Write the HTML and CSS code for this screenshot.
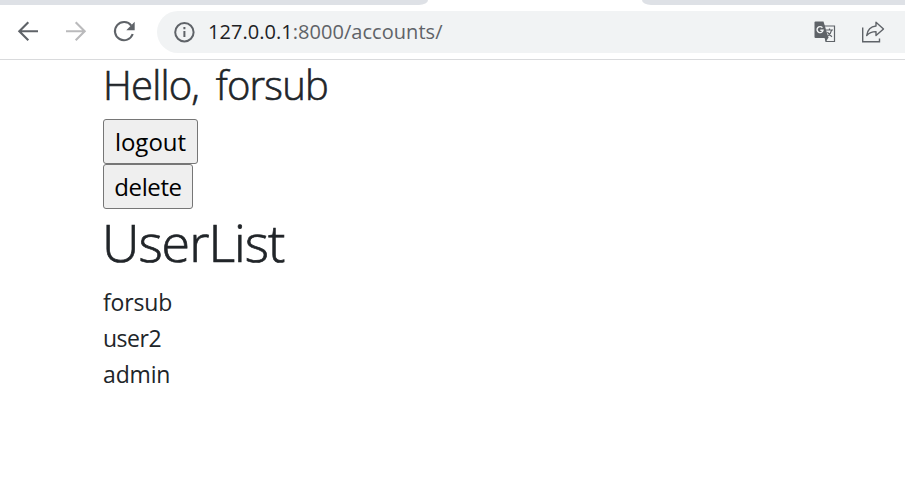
FILE: index.html
```html
<!DOCTYPE html>
<html lang="ko">
<head>
<meta charset="utf-8">
<title>accounts</title>
<link rel="stylesheet" href="styles.css">
</head>
<body>
<header class="browser">
  <div class="tabs"><span class="tab-left"></span><span class="tab-right"></span></div>
  <nav class="toolbar">
    <svg class="nav-icons" width="157" height="54" viewBox="0 5 157 54" fill="none" stroke="#5f6368" stroke-width="2.1">
      <path d="M38 31.3H20M28.3 22.3l-9 9 9 9"/>
      <path stroke="#bababc" d="M66 31.3h18M75.700 22.3l9 9-9 9"/>
      <path d="M131.3 25.6A9.1 9.1 0 1 0 132.7 34"/>
      <path fill="#5f6368" stroke="none" d="M134.7 21.8v8.4h-8.4z"/>
    </svg>
    <div class="address">
      <svg class="info" width="22" height="22" viewBox="0 0 22 22" fill="none" stroke="#5f6368" stroke-width="2">
        <circle cx="11.400" cy="11.300" r="9.2"/><path d="M11.400 10v6M11.400 6v2.200"/>
      </svg>
      <span class="url"><b>127.0.0.1</b>:8000/accounts/</span>
      <svg class="translate" width="22" height="22" viewBox="0 0 22 22">
        <path d="M9 5h11.5v15.500H12z" fill="#f1f3f4" stroke="#5f6368" stroke-width="1.200"/>
        <path d="M1.5.5h8l5 16.500H1.500Q.5 17 .5 16V1.500Q.5.500 1.500.5z" fill="#5f6368"/>
        <path d="M10.500 16.500h4L12 20.500z" fill="#5f6368"/>
        <path d="M8.400 6.700A3 3 0 1 0 9 9.300H6.300" fill="none" stroke="#f1f3f4" stroke-width="1.400"/>
        <path d="M12 9h7M15.500 7.500V9M17.500 9.300c-.5 2.500-2 4.500-4 6M13.500 11c1 2 2.500 3.500 4.500 4.800" fill="none" stroke="#5f6368" stroke-width="1.200"/>
      </svg>
      <svg class="share" width="24" height="24" viewBox="0 0 24 24" fill="none" stroke="#5f6368" stroke-width="1.400">
        <path d="M1.700 7.500v14.300h16.800v-3.300"/>
        <path stroke-linejoin="round" d="M15 2.200l7.500 6.700-7.500 6.700v-4C10.500 11.500 8 13 5.700 15.500 6.500 10 9.500 6.500 15 6z"/>
      </svg>
    </div>
  </nav>
</header>
<main>
  <h2>Hello, forsub</h2>
  <button class="logout">logout</button>
  <button class="delete">delete</button>
  <h1>UserList</h1>
  <p>forsub</p>
  <p class="tight">user2</p>
  <p>admin</p>
</main>
</body>
</html>
```
FILE: styles.css
```css
* { box-sizing: border-box; }
body { margin: 0; background: #fff; color: #212529; font-family: "Open Sans", "Noto Sans", sans-serif; overflow: hidden; }
.browser { height: 60px; border-bottom: 1px solid #d9dadc; }
.tabs { display: flex; justify-content: space-between; height: 5px; }
.tab-left { width: 428px; background: #dee1e6; border-bottom-right-radius: 9px 5px; }
.tab-right { width: 263px; background: #dee1e6; border-bottom-left-radius: 9px 5px; }
.toolbar { display: flex; height: 54px; }
.address { display: flex; align-items: center; flex: 1; height: 42px; margin-top: 6px; padding-left: 16px; background: #f1f3f4; border-radius: 21px 0 0 21px; }
.url { flex: 1; margin-left: 13px; font-size: 20px; line-height: 42px; color: #5f6368; letter-spacing: .04px; white-space: nowrap; }
.url b { font-weight: 400; color: #202124; }
.translate { margin-right: 25px; }
.share { margin-right: 20px; }
main { padding-left: 103px; }
h1, h2, p { margin: 0; font-weight: 400; white-space: nowrap; }
h2 { height: 59px; font-size: 40px; line-height: 50px; font-weight: 300; letter-spacing: -.8px; word-spacing: 7px; -webkit-text-stroke: .6px #212529; }
button { display: block; height: 45px; padding: 0; font: 400 24px/40px "Open Sans", "Noto Sans", sans-serif; color: #000; background: #efefef; border: 1px solid #767676; border-radius: 3px; }
.logout { width: 95px; }
.delete { width: 90px; letter-spacing: -.4px; }
h1 { height: 76px; font-size: 52px; line-height: 66px; font-weight: 300; letter-spacing: -1px; margin-left: -1px; -webkit-text-stroke: .7px #212529; }
p { height: 36px; font-size: 23px; line-height: 34px; letter-spacing: -.15px; }
.tight { letter-spacing: -.5px; }
```
